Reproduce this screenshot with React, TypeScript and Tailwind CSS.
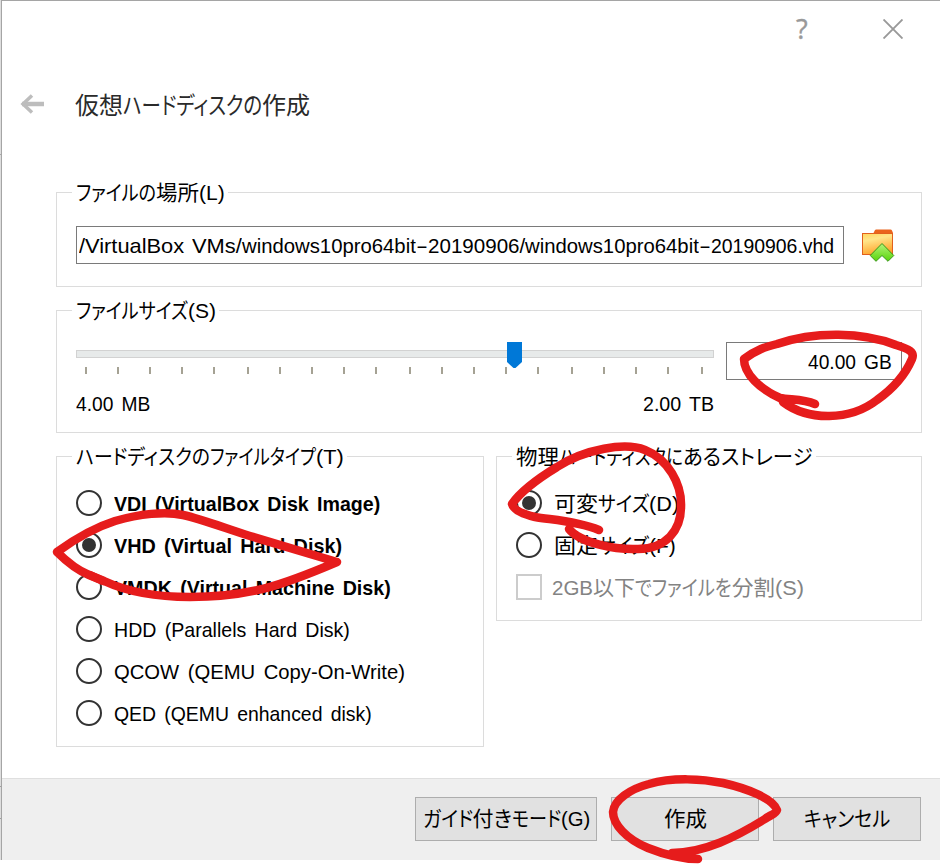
import { useLayoutEffect, useRef, useState } from "react"
import type { ReactNode } from "react"

type Part = [text: string, width: number];

// Text squeezed or stretched to a fixed width
function Fit({ text, width }: { text: string; width: number }) {
  const ref = useRef<HTMLSpanElement>(null);
  const [scale, setScale] = useState(1);

  useLayoutEffect(() => {
    if (ref.current) setScale(width / ref.current.offsetWidth);
  }, [width]);

  return (
    <span className="inline-block whitespace-nowrap" style={{ width }}>
      <span
        ref={ref}
        className="inline-block origin-left"
        style={{ transform: `scaleX(${scale})` }}
      >
        {text}
      </span>
    </span>
  );
}

function Label({ parts, className = "" }: { parts: Part[]; className?: string }) {
  return (
    <span className={`flex whitespace-nowrap ${className}`}>
      {parts.map(([text, width], i) => (
        <Fit key={i} text={text} width={width} />
      ))}
    </span>
  );
}

function Group({ title, className, children }: { title: Part[]; className: string; children: ReactNode }) {
  return (
    <fieldset className={`border border-[#dcdcdc] min-w-0 ${className}`}>
      <legend className="ml-[15px] pl-1 pr-[3px] h-[25px] leading-[26px]">
        <Label parts={title} />
      </legend>
      {children}
    </fieldset>
  );
}

function Radio({ parts, checked = false, bold = false }: { parts: Part[]; checked?: boolean; bold?: boolean }) {
  return (
    <label className="flex items-center h-[42px]">
      <span className="w-[26px] h-[26px] rounded-full border-2 border-[#333333] flex items-center justify-center mr-3">
        {checked && <span className="w-[14px] h-[14px] rounded-full bg-[#333333]" />}
      </span>
      <Label parts={parts} className={bold ? "font-bold pt-0.5" : "pt-0.5"} />
    </label>
  );
}

function Button({ parts, className }: { parts: Part[]; className: string }) {
  return (
    <button className={`h-11 border border-[#adadad] bg-[#e1e1e1] flex items-center justify-center ${className}`}>
      <Label parts={parts} />
    </button>
  );
}

function FolderIcon() {
  return (
    <svg width="34" height="34" viewBox="0 0 34 34">
      <defs>
        <linearGradient id="folder" x1="0" y1="0" x2="0.3" y2="1">
          <stop offset="0" stopColor="#ffd65c" />
          <stop offset="0.35" stopColor="#ffe58a" />
          <stop offset="1" stopColor="#ffa52e" />
        </linearGradient>
        <linearGradient id="arrow" x1="0" y1="0" x2="0" y2="1">
          <stop offset="0" stopColor="#b4f47a" />
          <stop offset="1" stopColor="#58d40a" />
        </linearGradient>
      </defs>
      <path d="M12 5 L14 1 Q14.500 0.500 15 0.500 H29.500 Q30.500 0.500 31 1.500 L32 4 V26 H28 V6 H12 Z" fill="#ea641c" />
      <rect x="1.500" y="4.500" width="30" height="21" fill="url(#folder)" stroke="#e2601c" />
      <path
        d="M21 14.500 L32.800 26.500 L27 32.300 L21 26.500 L15 32.300 L9.200 26.500 Z"
        fill="url(#arrow)"
        stroke="#39961a"
        strokeLinejoin="round"
      />
    </svg>
  );
}

const TICKS = [85, 117, 149, 181, 213, 247, 279, 311, 343, 375, 409, 441, 473, 505, 537, 571, 603, 635, 667, 701];

const PATH: Part[] = [
  ["/VirtualBox", 105],
  ["\u00a0", 8],
  ["VMs/", 50],
  ["windows10pro64bit", 174],
  ["-", 12],
  ["20190906/", 97],
  ["windows10pro64bit", 174],
  ["-", 12],
  ["20190906.vhd", 123],
];

const FILE_TYPES: { text: string; width: number; checked?: boolean; bold?: boolean }[] = [
  { text: "VDI (VirtualBox Disk Image)", width: 266, bold: true },
  { text: "VHD (Virtual Hard Disk)", width: 228, bold: true, checked: true },
  { text: "VMDK (Virtual Machine Disk)", width: 277, bold: true },
  { text: "HDD (Parallels Hard Disk)", width: 236 },
  { text: "QCOW (QEMU Copy-On-Write)", width: 291 },
  { text: "QED (QEMU enhanced disk)", width: 258 },
];

// Red pen marks
const MARKS = [
  "M815 404 C803 399 791 400 780 398 C760 389 744 374 744 359 C756 350 765 347 777 344 C815 331 863 332 896 345 C909 349 915 352 912 359 C906 373 894 388 877 400 C850 421 808 421 783 402",
  "M337 562 L250 536 C222 527 201 519 183 515 C165 511 139 514 115 521 C90 529 72 541 57 552 C67 562 77 570 89 575 L104 581 C130 593 161 597 190 597 C250 597 283 585 337 562",
  "M90 575 L103 581",
  "M599 530 C577 521 553 520 535 517 C522 514 514 510 512 504 C521 491 539 478 557 467 C585 449 625 442 645 450 C668 459 682 484 681 507 C681 530 666 549 638 549 C616 550 580 543 569 529",
  "M698 859 C682 859 663 854 648 848 C626 839 613 824 613 812 C614 800 630 789 649 784 C673 777 703 779 723 783 C745 788 773 798 777 810 C776 814 770 815 765 819 C736 837 704 853 672 853",
];

export default function App() {
  return (
    <div className="relative w-[940px] h-[865px] overflow-hidden bg-white text-black text-[21px] [word-spacing:3px] [font-feature-settings:'palt'] [font-family:'Liberation_Sans','Noto_Sans_CJK_JP',sans-serif]">
      <div className="flex h-[860px]">

        {/* Window edge */}
        <div className="w-px bg-[#dedede] flex flex-col">
          <div className="h-[154px]" />
          <div className="h-px bg-[#a8a8a8]" />
          <div className="h-[631px]" />
          <div className="h-px bg-[#a0a0a0]" />
          <div className="h-[31px]" />
          <div className="h-px bg-[#a0a0a0]" />
        </div>

        <div className="w-[939px] border-l border-t border-[#a5a5a5] flex flex-col">

          {/* Title bar */}
          <div className="h-[57px] flex justify-end items-center pr-[37px] text-[#999999]">
            <span className="text-[27px] leading-none w-[14px] mr-[73px] mb-0.5 [-webkit-text-stroke:0.4px_#999999] [font-family:'Open_Sans',sans-serif]">?</span>
            <svg width="20" height="20" viewBox="0 0 20 20" fill="none" stroke="currentColor" strokeWidth="1.9" className="mb-px">
              <path d="M0.500 0.500 L19.500 19.500 M19.500 0.500 L0.500 19.500" />
            </svg>
          </div>

          {/* Header */}
          <div className="h-[94px] flex items-center pl-[18px]">
            <svg width="24" height="20" viewBox="0 0 24 20" fill="none" stroke="#bdbdbd" className="mb-0.5">
              <path d="M2 10 H24" strokeWidth="4.500" />
              <path d="M12 1.500 L3 10 L12 18.500" strokeWidth="3.500" />
            </svg>
            <Label
              parts={[["仮想", 48], ["ハードディスクの", 139], ["作成", 48]]}
              className="ml-[31px] pt-0.5 text-[24px] text-[#2a2a2a]"
            />
          </div>

          {/* Content */}
          <div className="h-[626px] pt-7 pl-[54px] flex flex-col gap-[11px]">
            <Group title={[["ファイルの", 80], ["場所", 43], ["(L)", 26]]} className="w-[866px] h-[107px]">
              <div className="flex pl-[19px] pt-[21px] items-center">
                <div className="w-[768px] h-[38px] border border-[#7a7a7a] flex items-center pl-0.5 pt-0.5">
                  <Label parts={PATH} />
                </div>
                <span className="ml-[17px] mt-0.5">
                  <FolderIcon />
                </span>
              </div>
            </Group>

            <Group title={[["ファイルサイズ", 112], ["(S)", 28]]} className="w-[866px] h-[135px]">
              <div className="flex pl-[19px] pt-[19px]">
                <div className="w-[638px]">
                  <div className="relative h-8 pt-2">
                    <div className="h-2 border border-[#d2d2d2] bg-[#e7eaea]" />
                    {TICKS.map((x) => (
                      <span key={x} className="absolute top-[25px] w-0.5 h-[7px] bg-[#a5a294]" style={{ left: x - 76 }} />
                    ))}
                    <svg className="absolute left-[431px] top-0" width="15" height="26" viewBox="0 0 15 26">
                      <path d="M0 0 H15 V20 L8.500 26 H6.500 L0 20 Z" fill="#0078d7" />
                    </svg>
                  </div>
                  <div className="flex justify-between pt-[14px]">
                    <Fit text="4.00 MB" width={74} />
                    <Fit text="2.00 TB" width={71} />
                  </div>
                </div>
                <div className="ml-3 w-[176px] h-[38px] border border-[#7a7a7a] flex items-center justify-end pr-[9px] pt-0.5">
                  <Fit text="40.00 GB" width={84} />
                </div>
              </div>
            </Group>

            <div className="flex gap-3 items-start">
              <Group title={[["ハードディスクの", 134], ["ファイルタイプ", 106], ["(T)", 28]]} className="w-[428px] h-[303px]">
                <div className="pl-[19px] pt-[13px]">
                  {FILE_TYPES.map((t) => (
                    <Radio key={t.text} parts={[[t.text, t.width]]} checked={t.checked} bold={t.bold} />
                  ))}
                </div>
              </Group>

              <Group
                title={[["物理", 43], ["ハードディスクに", 124], ["あるストレージ", 130]]}
                className="w-[426px] h-[177px]"
              >
                <div className="pl-[19px] pt-[13px]">
                  <Radio parts={[["可変", 44], ["サイズ", 51], ["(D)", 30]]} checked />
                  <Radio parts={[["固定", 44], ["サイズ", 51], ["(F)", 27]]} />
                  <label className="flex items-center h-[42px] text-[#838383]">
                    <span className="w-[26px] h-[26px] border-2 border-[#cccccc] mr-[10px]" />
                    <Label
                      parts={[["2GB", 41], ["以下", 42], ["でファイルを", 97], ["分割", 43], ["(S)", 29]]}
                      className="pt-0.5"
                    />
                  </label>
                </div>
              </Group>
            </div>
          </div>

          {/* Footer */}
          <div className="h-[82px] border-t border-[#dfdfdf] bg-[#efefef] flex justify-end gap-[14px] pr-[19px] pt-[18px]">
            <Button parts={[["ガイド", 50], ["付き", 39], ["モード", 49], ["(G)", 29]]} className="w-[182px]" />
            <Button parts={[["作成", 43]]} className="w-[148px]" />
            <Button parts={[["キャンセル", 86]]} className="w-[148px]" />
          </div>
        </div>
      </div>

      <svg
        className="absolute inset-0 pointer-events-none"
        width="940"
        height="865"
        fill="none"
        stroke="#e61c1c"
        strokeWidth="8.5"
        strokeLinecap="round"
        strokeLinejoin="round"
      >
        {MARKS.map((d) => (
          <path key={d} d={d} />
        ))}
      </svg>
    </div>
  );
}
